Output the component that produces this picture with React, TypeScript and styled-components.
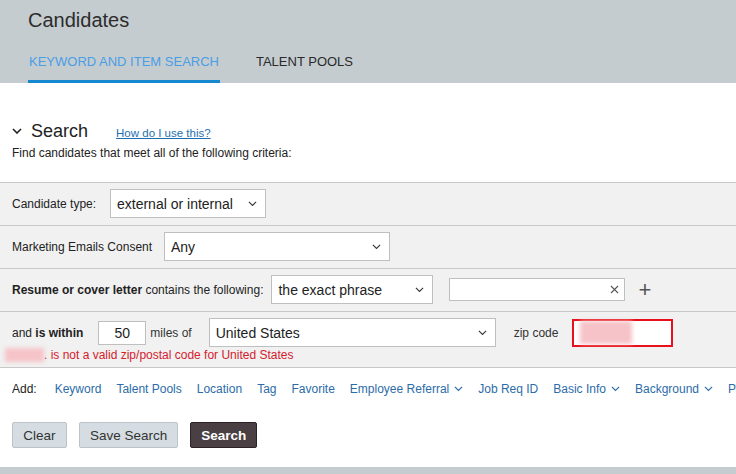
import styled, { createGlobalStyle } from "styled-components";

const GlobalStyle = createGlobalStyle`
  html, body {
    margin: 0;
    padding: 0;
    overflow: hidden;
    background: #ffffff;
  }
  body {
    font-family: "Liberation Sans", Arial, sans-serif;
    color: #333333;
  }
`;

const Page = styled.div`
  width: 736px;
  height: 474px;
  display: flex;
  flex-direction: column;
  overflow: hidden;
`;

const Header = styled.header`
  height: 83px;
  background-color: #c5ccd0;
  padding-left: 28px;
  display: flex;
  flex-direction: column;
  box-sizing: border-box;
`;

const Title = styled.h1`
  margin: 8px 0 0;
  font-size: 20px;
  font-weight: normal;
  line-height: 24px;
  color: #2c2c2c;
`;

const Tabs = styled.div`
  display: flex;
  gap: 35px;
  margin-top: 12px;
`;

const Tab = styled.div<{ $active?: boolean }>`
  height: 39px;
  box-sizing: border-box;
  display: flex;
  align-items: center;
  padding: 0 1px 2px;
  font-size: 13px;
  color: ${(p) => (p.$active ? "#4a9ee4" : "#2a2a2a")};
  border-bottom: 3px solid ${(p) => (p.$active ? "#1688cf" : "transparent")};
`;

const Main = styled.main`
  flex: 1;
  display: flex;
  flex-direction: column;
`;

const SectionHead = styled.div`
  display: flex;
  align-items: center;
  margin: 36px 0 0 12px;
  height: 24px;
`;

const SectionTitle = styled.h2`
  margin: 0 0 0 9px;
  font-size: 18px;
  font-weight: normal;
  color: #222;
`;

const HelpLink = styled.a`
  margin-left: 28px;
  margin-top: 3px;
  font-size: 11.5px;
  color: #1f6fae;
  text-decoration: underline;
`;

const Intro = styled.p`
  margin: 2px 0 21px 12px;
  font-size: 12px;
  line-height: 16px;
  color: #222;
`;

const Criteria = styled.div`
  border-bottom: 1px solid #c8c8c8;
`;

const Row = styled.div<{ $wrap?: boolean }>`
  background-color: #f1f1f1;
  border-top: 1px solid #c8c8c8;
  padding: 6px 12px ${(p) => (p.$wrap ? "4px" : "7px")};
  display: flex;
  flex-direction: column;
`;

const Line = styled.div`
  display: flex;
  align-items: center;
  min-height: 29px;
`;

const Label = styled.span<{ $w?: number }>`
  font-size: 12px;
  color: #222;
  width: ${(p) => (p.$w ? `${p.$w}px` : "auto")};
  flex-shrink: 0;
  white-space: nowrap;

  b {
    font-weight: bold;
  }
`;

const Select = styled.div<{ $w: number; $ml?: number }>`
  width: ${(p) => p.$w}px;
  margin-left: ${(p) => p.$ml ?? 0}px;
  height: 29px;
  box-sizing: border-box;
  background: #fff;
  border: 1px solid #bfbfbf;
  display: flex;
  align-items: center;
  justify-content: space-between;
  padding: 0 8px 0 6px;
  font-size: 14px;
  color: #222;
  flex-shrink: 0;
`;

const TextBox = styled.div<{ $w: number; $ml?: number }>`
  width: ${(p) => p.$w}px;
  margin-left: ${(p) => p.$ml ?? 0}px;
  height: 23px;
  box-sizing: border-box;
  background: #fff;
  border: 1px solid #bfbfbf;
  display: flex;
  align-items: center;
  justify-content: flex-end;
  padding-right: 5px;
  flex-shrink: 0;
`;

const NumberBox = styled.div`
  width: 48px;
  height: 24px;
  margin-left: 15px;
  box-sizing: border-box;
  background: #fff;
  border: 1px solid #bfbfbf;
  display: flex;
  align-items: center;
  justify-content: center;
  font-size: 14px;
  color: #222;
`;

const Miles = styled.span`
  margin: 0 17px 0 4px;
  font-size: 12px;
  color: #333;
`;

const ZipLabel = styled.span`
  margin: 0 14px 0 18px;
  font-size: 12px;
  color: #333;
`;

const ZipBox = styled.div`
  width: 101px;
  height: 28px;
  box-sizing: border-box;
  background: #fff;
  border: 2px solid #e8101a;
  padding: 1px 6px;
  display: flex;
  align-items: center;
`;

const Blur = styled.span<{ $w: number; $h: number }>`
  display: inline-block;
  width: ${(p) => p.$w}px;
  height: ${(p) => p.$h}px;
  background: #f5c3c8;
  filter: blur(2px);
`;

const ErrorLine = styled.div`
  display: flex;
  align-items: center;
  height: 16px;
  margin: 0 0 0 -7px;
  font-size: 12px;
  color: #d4202d;
`;

const Plus = styled.span`
  margin-left: 13px;
  font-size: 22px;
  line-height: 1;
  color: #555;
  font-weight: 300;
`;

const AddBar = styled.div`
  display: flex;
  align-items: center;
  gap: 15px;
  height: 16px;
  margin: 13px 0 0 12px;
  font-size: 12px;
  white-space: nowrap;
`;

const AddLabel = styled.span`
  color: #222;
  margin-right: 3px;
`;

const AddLink = styled.span`
  color: #2b6ca8;
  display: inline-flex;
  align-items: center;
  gap: 5px;
`;

const Buttons = styled.div`
  display: flex;
  gap: 12px;
  margin: 25px 0 0 12px;
`;

const Button = styled.button<{ $primary?: boolean }>`
  height: 26px;
  min-width: 55px;
  padding: 0 10px;
  border-radius: 2px;
  font-family: inherit;
  font-size: 13.5px;
  font-weight: ${(p) => (p.$primary ? "bold" : "normal")};
  color: ${(p) => (p.$primary ? "#ffffff" : "#333333")};
  background: ${(p) => (p.$primary ? "#4a3f43" : "#d5dde2")};
  border: 1px solid ${(p) => (p.$primary ? "#2a2225" : "#bcc4c9")};
`;

const Footer = styled.div`
  margin-top: auto;
  height: 7px;
  background: #c5ccd0;
`;

const Chevron = ({ size = 10, color = "#333", width = 1.2 }: { size?: number; color?: string; width?: number }) => (
  <svg width={size} height={size * 0.6} viewBox="0 0 10 6" fill="none">
    <path d="M1 1 L5 5 L9 1" stroke={color} strokeWidth={width} />
  </svg>
);

const App = () => {
  const links: [string, boolean][] = [
    ["Keyword", false],
    ["Talent Pools", false],
    ["Location", false],
    ["Tag", false],
    ["Favorite", false],
    ["Employee Referral", true],
    ["Job Req ID", false],
    ["Basic Info", true],
    ["Background", true],
    ["Preferences", true],
  ];

  return (
    <Page>
      <GlobalStyle />
      <Header>
        <Title>Candidates</Title>
        <Tabs>
          <Tab $active>KEYWORD AND ITEM SEARCH</Tab>
          <Tab>TALENT POOLS</Tab>
        </Tabs>
      </Header>
      <Main>
        <SectionHead>
          <Chevron size={10} color="#222" width={1.6} />
          <SectionTitle>Search</SectionTitle>
          <HelpLink>How do I use this?</HelpLink>
        </SectionHead>
        <Intro>Find candidates that meet all of the following criteria:</Intro>

        <Criteria>
          <Row>
            <Line>
              <Label $w={98}>Candidate type:</Label>
              <Select $w={156}>
                external or internal
                <Chevron size={9} />
              </Select>
            </Line>
          </Row>
          <Row>
            <Line>
              <Label $w={152}>Marketing Emails Consent</Label>
              <Select $w={226}>
                Any
                <Chevron size={9} />
              </Select>
            </Line>
          </Row>
          <Row>
            <Line>
              <Label>
                <b>Resume or cover letter</b> contains the following:
              </Label>
              <Select $w={162} $ml={8}>
                the exact phrase
                <Chevron size={9} />
              </Select>
              <TextBox $w={176} $ml={16}>
                <svg width="9" height="9" viewBox="0 0 9 9">
                  <path d="M1 1 L8 8 M8 1 L1 8" stroke="#555" strokeWidth="1.1" />
                </svg>
              </TextBox>
              <Plus>+</Plus>
            </Line>
          </Row>
          <Row $wrap>
            <Line>
              <Label>
                and <b>is within</b>
              </Label>
              <NumberBox>50</NumberBox>
              <Miles>miles of</Miles>
              <Select $w={287}>
                United States
                <Chevron size={9} />
              </Select>
              <ZipLabel>zip code</ZipLabel>
              <ZipBox>
                <Blur $w={52} $h={23} />
              </ZipBox>
            </Line>
            <ErrorLine>
              <Blur $w={39} $h={14} />
              <span>. is not a valid zip/postal code for United States</span>
            </ErrorLine>
          </Row>
        </Criteria>

        <AddBar>
          <AddLabel>Add:</AddLabel>
          {links.map(([name, menu]) => (
            <AddLink key={name}>
              {name}
              {menu && <Chevron size={9} color="#2b6ca8" width={1.3} />}
            </AddLink>
          ))}
        </AddBar>

        <Buttons>
          <Button>Clear</Button>
          <Button>Save Search</Button>
          <Button $primary>Search</Button>
        </Buttons>
        <Footer />
      </Main>
    </Page>
  );
};

export default App;
